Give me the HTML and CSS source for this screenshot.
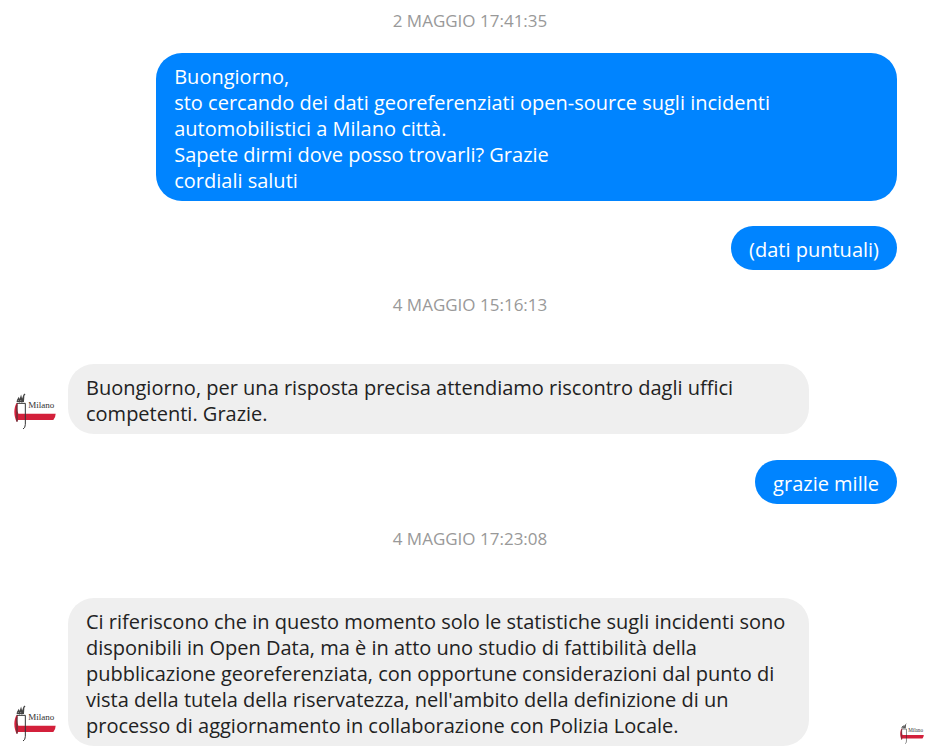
FILE: index.html
```
<!DOCTYPE html>
<html lang="it">
<head>
    <meta charset="UTF-8">
    <meta name="viewport" content="width=device-width, initial-scale=1.0">
    <title>Chat</title>
    <link rel="stylesheet" href="styles.css">
</head>
<body>
    <div class="chat">
        <div class="time">2 MAGGIO 17:41:35</div>
        <div class="message sent">
            <div class="bubble">Buongiorno,<br>sto cercando dei dati georeferenziati open-source sugli incidenti automobilistici a Milano città.<br>Sapete dirmi dove posso trovarli? Grazie<br>cordiali saluti</div>
        </div>
        <div class="message sent">
            <div class="bubble">(dati puntuali)</div>
        </div>
        <div class="time">4 MAGGIO 15:16:13</div>
        <div class="message received">
            <svg class="avatar" viewBox="0 0 126 126">
                <path fill="#d3203b" d="M8 36 C-1 49 -2 76 9 94 L12 87 H118 Q125 78 125 68 H13 C9 58 9 46 12 37Z"/>
                <path fill="none" stroke="#333" stroke-width="3" d="M8 37 H34 V100 Q34 111 27 114 M9 41 V92"/>
                <path fill="none" stroke="#444" stroke-width="4" d="M8 31 H30 M10 29 L14 22 L17 30 L21 18 L24 30 L30 12 L33 9 M29 16 L28 31"/>
                <text x="43" y="51">Milano</text>
            </svg>
            <div class="bubble">Buongiorno, per una risposta precisa attendiamo riscontro dagli uffici competenti. Grazie.</div>
        </div>
        <div class="message sent">
            <div class="bubble">grazie mille</div>
        </div>
        <div class="time">4 MAGGIO 17:23:08</div>
        <div class="message received">
            <svg class="avatar" viewBox="0 0 126 126">
                <path fill="#d3203b" d="M8 36 C-1 49 -2 76 9 94 L12 87 H118 Q125 78 125 68 H13 C9 58 9 46 12 37Z"/>
                <path fill="none" stroke="#333" stroke-width="3" d="M8 37 H34 V100 Q34 111 27 114 M9 41 V92"/>
                <path fill="none" stroke="#444" stroke-width="4" d="M8 31 H30 M10 29 L14 22 L17 30 L21 18 L24 30 L30 12 L33 9 M29 16 L28 31"/>
                <text x="43" y="51">Milano</text>
            </svg>
            <div class="bubble">Ci riferiscono che in questo momento solo le statistiche sugli incidenti sono disponibili in Open Data, ma è in atto uno studio di fattibilità della pubblicazione georeferenziata, con opportune considerazioni dal punto di vista della tutela della riservatezza, nell'ambito della definizione di un processo di aggiornamento in collaborazione con Polizia Locale.</div>
            <!-- letto -->
            <svg class="seen" viewBox="0 0 126 126">
                <path fill="#d3203b" d="M8 36 C-1 49 -2 76 9 94 L12 87 H118 Q125 78 125 68 H13 C9 58 9 46 12 37Z"/>
                <path fill="none" stroke="#333" stroke-width="3" d="M8 37 H34 V100 Q34 111 27 114 M9 41 V92"/>
                <path fill="none" stroke="#444" stroke-width="4" d="M8 31 H30 M10 29 L14 22 L17 30 L21 18 L24 30 L30 12 L33 9 M29 16 L28 31"/>
                <text x="43" y="51">Milano</text>
            </svg>
        </div>
    </div>
</body>
</html>
```

FILE: styles.css
```
body{
    margin: 0;
    background-color: white;
    font-family: "Open Sans", "Noto Sans", sans-serif;
    font-size: 20px;
    line-height: 26px;
}
.chat{
    padding: 10px 0 8px;
}
.time{
    margin: 24px 0 21px;
    padding-left: 14px;
    text-align: center;
    font-size: 17px;
    line-height: 22px;
    color: #999;
}
.time:first-child{
    margin-top: 0;
}
.message{
    display: flex;
    align-items: flex-end;
}
.sent + .sent{
    margin-top: 25px;
}
.received + .sent{
    margin-top: 26px;
}
.sent{
    justify-content: flex-end;
    padding-right: 29px;
}
.received{
    padding: 27px 2px 0 14px;
}
.bubble{
    box-sizing: border-box;
    max-width: 80vw;
    padding: 11px 18px 7px;
    border-radius: 26px;
}
.sent .bubble{
    background-color: #0084ff;
    color: white;
}
.received .bubble{
    background-color: #efefef;
    color: #222;
}
.avatar{
    flex: none;
    width: 42px;
    height: 42px;
    margin: 0 12px 1px 0;
}
.seen{
    flex: none;
    width: 24px;
    height: 24px;
    margin-left: auto;
}
.avatar text, .seen text{
    font-family: "Liberation Serif", serif;
    font-size: 27px;
    fill: #333;
}
```
